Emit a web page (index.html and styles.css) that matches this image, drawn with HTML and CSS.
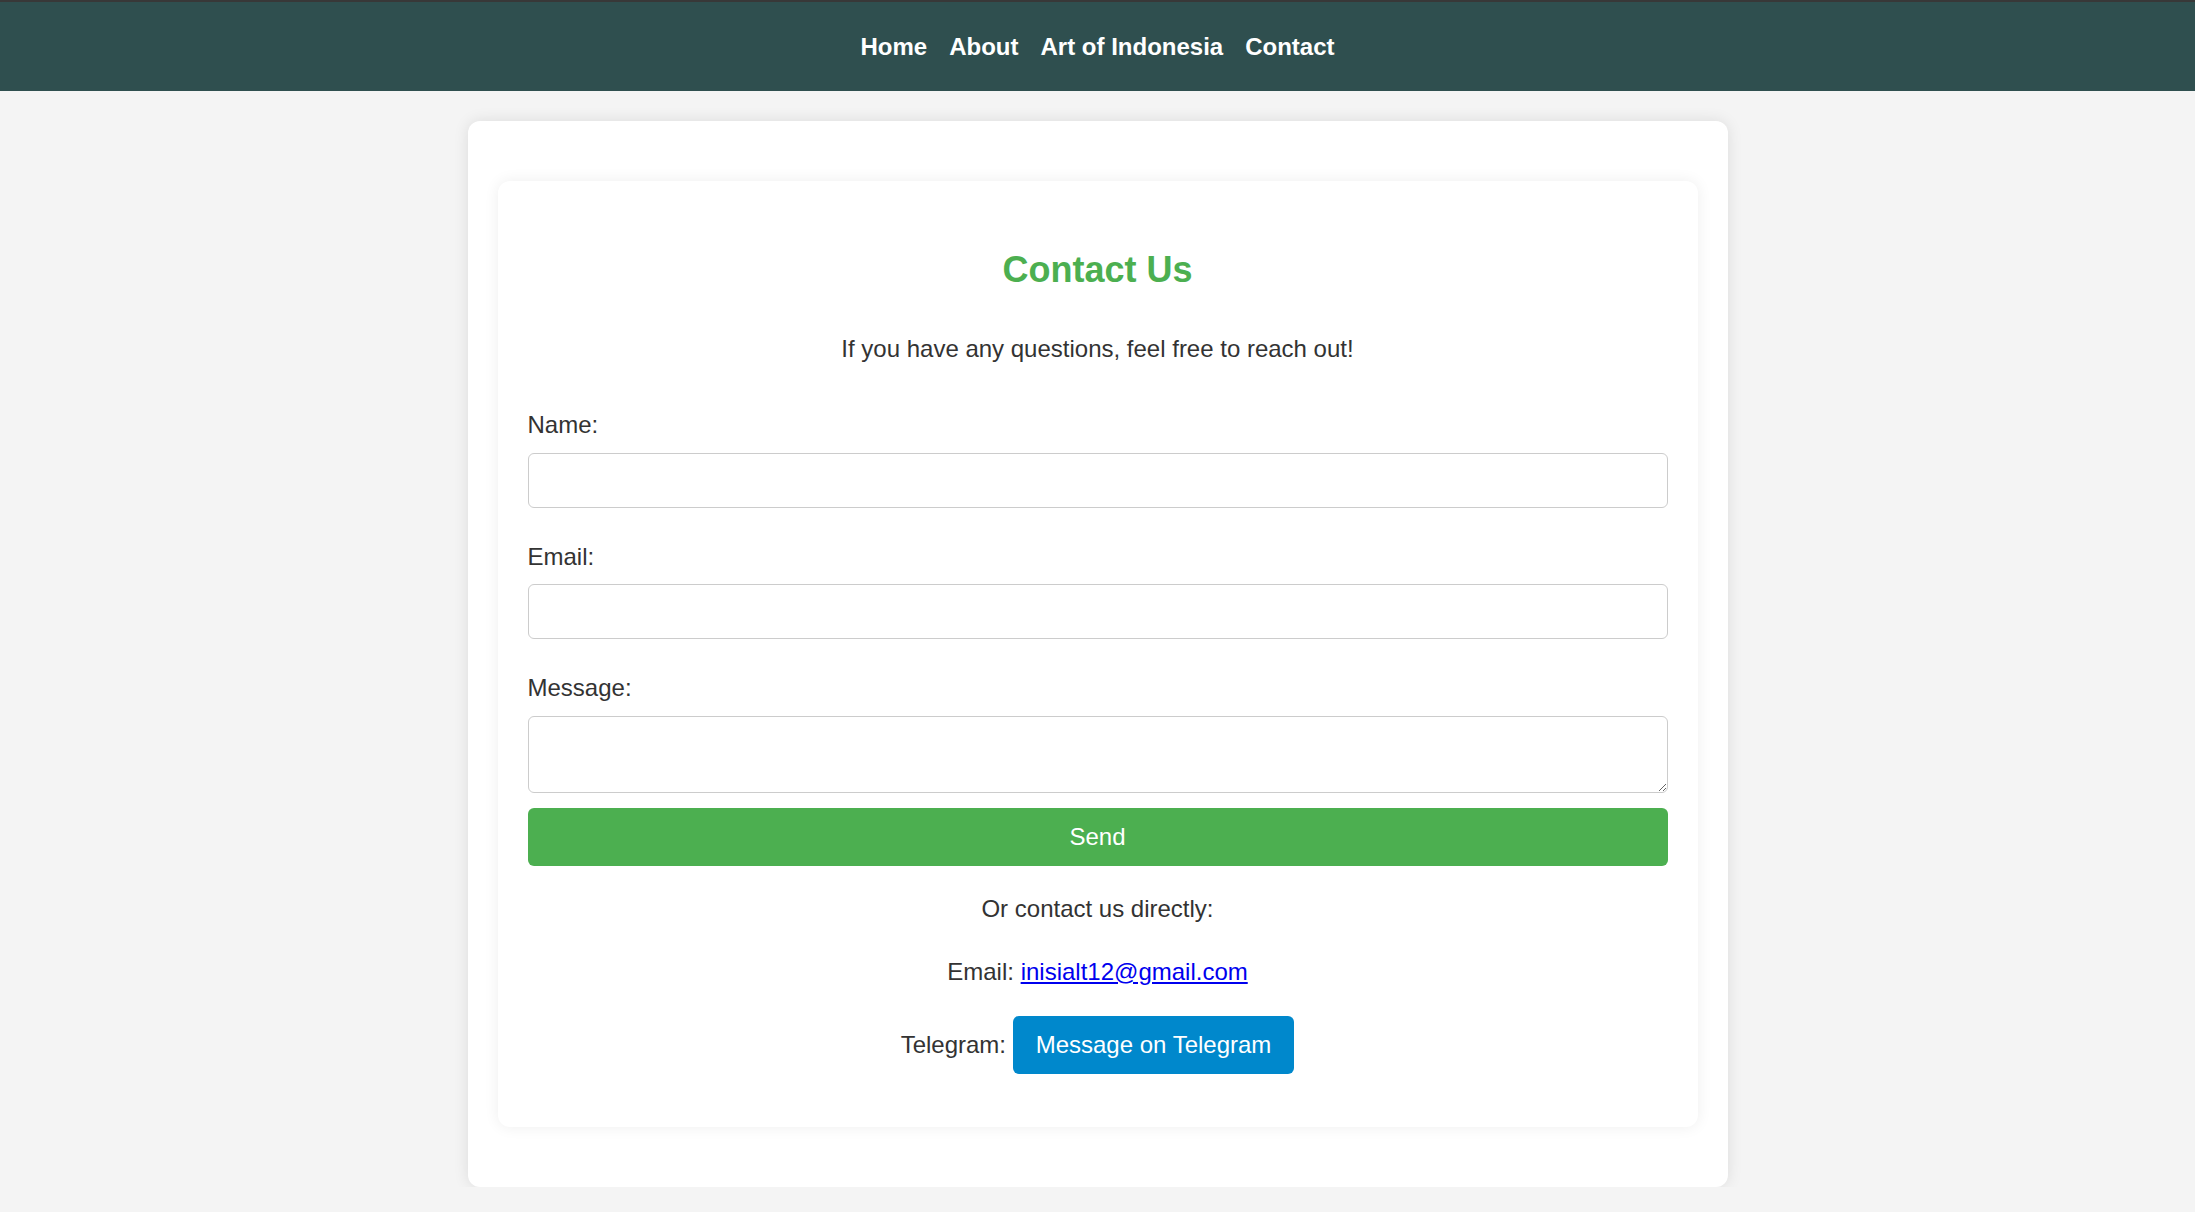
FILE: index.html
```html
<!DOCTYPE html>
<html lang="en">
<head>
<meta charset="utf-8">
<title>Contact Us</title>
<link rel="stylesheet" href="styles.css">
</head>
<body>
<nav class="topnav">
  <a href="#" class="navlink">Home</a>
  <a href="#" class="navlink">About</a>
  <a href="#" class="navlink">Art of Indonesia</a>
  <a href="#" class="navlink">Contact</a>
</nav>
<main class="outer">
  <section class="card">
    <h1 class="title">Contact Us</h1>
    <p class="intro">If you have any questions, feel free to reach out!</p>
    <form class="form">
      <label class="label" for="name">Name:</label>
      <input class="field" type="text" id="name">
      <label class="label label-gap" for="email">Email:</label>
      <input class="field" type="email" id="email">
      <label class="label label-gap" for="message">Message:</label>
      <textarea class="field area" id="message"></textarea>
      <button type="button" class="send">Send</button>
    </form>
    <p class="direct">Or contact us directly:</p>
    <p class="mail">Email: <a href="#" class="maillink">inisialt12@gmail.com</a></p>
    <p class="tg">Telegram: <a href="#" class="tgbtn">Message on Telegram</a></p>
  </section>
</main>
</body>
</html>
```

FILE: styles.css
```css
html, body {
  margin: 0;
  padding: 0;
}
body {
  background: #f4f4f4;
  font-family: "Liberation Sans", Arial, sans-serif;
  color: #333;
  font-size: 24px;
  line-height: 28px;
}
.topnav {
  height: 89px;
  border-top: 2px solid #383838;
  background: #2f4f4f;
  display: flex;
  justify-content: center;
  align-items: center;
  gap: 22px;
}
.navlink {
  color: #fff;
  text-decoration: none;
  font-weight: bold;
  font-size: 24px;
  line-height: 28px;
}
.outer {
  width: 1260px;
  box-sizing: border-box;
  margin: 30px auto 0;
  padding: 60px 30px;
  background: #fff;
  border-radius: 12px;
  box-shadow: 0 0 15px rgba(0, 0, 0, 0.1);
}
.card {
  width: 1200px;
  box-sizing: border-box;
  padding: 31px 30px 30px;
  background: #fff;
  border-radius: 12px;
  box-shadow: 0 0 15px rgba(0, 0, 0, 0.07);
  text-align: center;
}
.title {
  margin: 38px 0 0;
  font-size: 36px;
  line-height: 40px;
  color: #4caf50;
  font-weight: bold;
}
.intro {
  margin: 45px 0 0;
}
.form {
  margin-top: 48px;
  display: flex;
  flex-direction: column;
  text-align: left;
}
.label {
  display: block;
  line-height: 28px;
  margin-bottom: 14px;
}
.label-gap {
  margin-top: 35px;
  margin-bottom: 13px;
}
.field {
  display: block;
  box-sizing: border-box;
  width: 100%;
  height: 55px;
  margin: 0;
  border: 1.5px solid #cccccc;
  border-radius: 6px;
  background: #fff;
  font-family: inherit;
  font-size: 24px;
  padding: 12px;
}
.area {
  height: 77px;
  margin-top: 1px;
}
.send {
  margin-top: 15px;
  height: 58px;
  width: 100%;
  border: none;
  border-radius: 6px;
  background: #4caf50;
  color: #fff;
  font-family: inherit;
  font-size: 24px;
}
.direct {
  margin: 29px 0 0;
}
.mail {
  margin: 35px 0 0;
}
.maillink {
  color: #0000ee;
}
.tg {
  margin: 30px 0 23px;
}
.tgbtn {
  display: inline-block;
  padding: 15px 23px;
  background: #0088cc;
  color: #fff;
  text-decoration: none;
  border-radius: 6px;
  line-height: 28px;
}
```
